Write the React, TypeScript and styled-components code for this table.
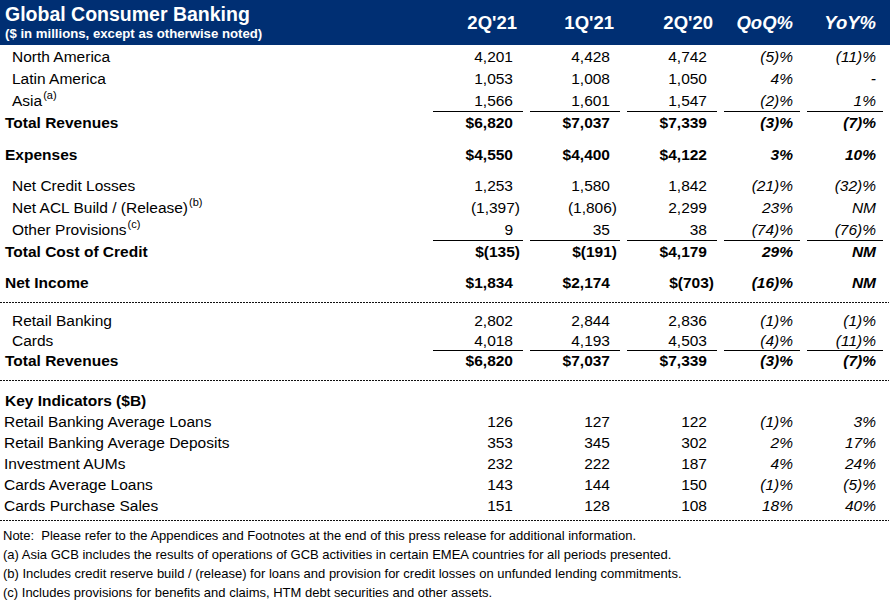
import React from "react";
import styled, { createGlobalStyle } from "styled-components";

const GlobalStyle = createGlobalStyle`
  body {
    margin: 0;
    background: #fff;
    color: #000;
    font-family: "Liberation Sans", Arial, sans-serif;
  }
`;

const Sheet = styled.div`
  width: 890px;
  display: flex;
  flex-direction: column;
`;

const Grid = styled.div<{ $h: number; $mt?: number }>`
  display: grid;
  grid-template-columns: 426px repeat(3, 90px) repeat(2, 76px);
  column-gap: 7px;
  height: ${(p) => p.$h}px;
  margin-top: ${(p) => p.$mt ?? 0}px;
`;

const HeaderBar = styled(Grid)`
  background: #002f73;
  color: #fff;
`;

const TitleBlock = styled.div`
  display: flex;
  flex-direction: column;
  padding: 3px 0 0 5px;
  font-weight: bold;
`;

const Title = styled.div`
  font-size: 19.5px;
  line-height: 22px;
`;

const Subtitle = styled.div`
  font-size: 13.2px;
  line-height: 18px;
`;

const HeadLabel = styled.div<{ $italic?: boolean; $pr: number }>`
  display: flex;
  align-items: center;
  justify-content: flex-end;
  padding-right: ${(p) => p.$pr}px;
  font-size: 18.5px;
  font-weight: bold;
  font-style: ${(p) => (p.$italic ? "italic" : "normal")};
`;

const Label = styled.div<{ $indent: number; $bold?: boolean }>`
  display: flex;
  align-items: center;
  padding-left: ${(p) => p.$indent}px;
  font-size: 15.5px;
  font-weight: ${(p) => (p.$bold ? "bold" : "normal")};
  white-space: nowrap;
`;

const Sup = styled.span`
  font-size: 11px;
  line-height: 1;
  position: relative;
  top: -6px;
  margin-left: 1px;
`;

const Value = styled.div<{ $bold?: boolean; $italic?: boolean; $pr: number; $underline?: boolean }>`
  display: flex;
  align-items: center;
  justify-content: flex-end;
  padding-right: ${(p) => p.$pr}px;
  font-size: 15.5px;
  font-weight: ${(p) => (p.$bold ? "bold" : "normal")};
  font-style: ${(p) => (p.$italic ? "italic" : "normal")};
  border-bottom: ${(p) => (p.$underline ? "1px solid #000" : "none")};
  white-space: nowrap;
`;

const Pad = styled.span`
  display: inline-block;
  width: 7px;
`;

const Dashed = styled.div<{ $mt: number }>`
  width: 889px;
  height: 1px;
  margin-top: ${(p) => p.$mt}px;
  background-image: repeating-linear-gradient(to right, #111 0 2px, transparent 2px 3px);
`;

const Notes = styled.div`
  margin-top: 5px;
  display: flex;
  flex-direction: column;
`;

const Note = styled.div`
  padding-left: 3px;
  font-size: 13px;
  line-height: 19px;
  white-space: pre;
`;

type Kind = "item" | "total" | "indicator" | "heading";

interface IRow {
  label: string;
  sup?: string;
  values: string[];
  kind: Kind;
  h: number;
  mt?: number;
  underline?: boolean;
}

const amountPad = [3, 3, 3];
const pctPad = [7, 7];

const Row = ({ row }: { row: IRow }) => {
  const bold = row.kind === "total";
  const indent = row.kind === "item" ? 12 : row.kind === "indicator" ? 4 : 5;
  return (
    <Grid $h={row.h} $mt={row.mt}>
      <Label $indent={indent} $bold={bold || row.kind === "heading"}>
        {row.label}
        {row.sup && <Sup>({row.sup})</Sup>}
      </Label>
      {row.values.map((v, i) =>
        i < 3 ? (
          <Value key={i} $bold={bold} $pr={amountPad[i]} $underline={row.underline}>
            {v}
            {v && !v.endsWith(")") && <Pad />}
          </Value>
        ) : (
          <Value key={i} $bold={bold} $italic $pr={pctPad[i - 3]} $underline={row.underline}>
            {v}
          </Value>
        )
      )}
    </Grid>
  );
};

const top: IRow[] = [
  { label: "North America", values: ["4,201", "4,428", "4,742", "(5)%", "(11)%"], kind: "item", h: 22, mt: 1 },
  { label: "Latin America", values: ["1,053", "1,008", "1,050", "4%", "-"], kind: "item", h: 22 },
  { label: "Asia", sup: "a", values: ["1,566", "1,601", "1,547", "(2)%", "1%"], kind: "item", h: 22, underline: true },
  { label: "Total Revenues", values: ["$6,820", "$7,037", "$7,339", "(3)%", "(7)%"], kind: "total", h: 22 },
  { label: "Expenses", values: ["$4,550", "$4,400", "$4,122", "3%", "10%"], kind: "total", h: 22, mt: 10 },
  { label: "Net Credit Losses", values: ["1,253", "1,580", "1,842", "(21)%", "(32)%"], kind: "item", h: 22, mt: 9 },
  { label: "Net ACL Build / (Release)", sup: "b", values: ["(1,397)", "(1,806)", "2,299", "23%", "NM"], kind: "item", h: 22 },
  { label: "Other Provisions", sup: "c", values: ["9", "35", "38", "(74)%", "(76)%"], kind: "item", h: 22, underline: true },
  { label: "Total Cost of Credit", values: ["$(135)", "$(191)", "$4,179", "29%", "NM"], kind: "total", h: 22 },
  { label: "Net Income", values: ["$1,834", "$2,174", "$(703)", "(16)%", "NM"], kind: "total", h: 22, mt: 9 },
];

const business: IRow[] = [
  { label: "Retail Banking", values: ["2,802", "2,844", "2,836", "(1)%", "(1)%"], kind: "item", h: 20, mt: 8 },
  { label: "Cards", values: ["4,018", "4,193", "4,503", "(4)%", "(11)%"], kind: "item", h: 20, underline: true },
  { label: "Total Revenues", values: ["$6,820", "$7,037", "$7,339", "(3)%", "(7)%"], kind: "total", h: 20 },
];

const indicators: IRow[] = [
  { label: "Key Indicators ($B)", values: [], kind: "heading", h: 20, mt: 10 },
  { label: "Retail Banking Average Loans", values: ["126", "127", "122", "(1)%", "3%"], kind: "indicator", h: 21 },
  { label: "Retail Banking Average Deposits", values: ["353", "345", "302", "2%", "17%"], kind: "indicator", h: 21 },
  { label: "Investment AUMs", values: ["232", "222", "187", "4%", "24%"], kind: "indicator", h: 21 },
  { label: "Cards Average Loans", values: ["143", "144", "150", "(1)%", "(5)%"], kind: "indicator", h: 21 },
  { label: "Cards Purchase Sales", values: ["151", "128", "108", "18%", "40%"], kind: "indicator", h: 21 },
];

const notes = [
  "Note:  Please refer to the Appendices and Footnotes at the end of this press release for additional information.",
  "(a) Asia GCB includes the results of operations of GCB activities in certain EMEA countries for all periods presented.",
  "(b) Includes credit reserve build / (release) for loans and provision for credit losses on unfunded lending commitments.",
  "(c) Includes provisions for benefits and claims, HTM debt securities and other assets.",
];

const App = () => {
  return (
    <>
      <GlobalStyle />
      <Sheet>
        <HeaderBar $h={45}>
          <TitleBlock>
            <Title>Global Consumer Banking</Title>
            <Subtitle>($ in millions, except as otherwise noted)</Subtitle>
          </TitleBlock>
          <HeadLabel $pr={6}>2Q'21</HeadLabel>
          <HeadLabel $pr={6}>1Q'21</HeadLabel>
          <HeadLabel $pr={4}>2Q'20</HeadLabel>
          <HeadLabel $pr={7} $italic>QoQ%</HeadLabel>
          <HeadLabel $pr={7} $italic>YoY%</HeadLabel>
        </HeaderBar>
        {top.map((r, i) => <Row key={"t" + i} row={r} />)}
        <Dashed $mt={8} />
        {business.map((r, i) => <Row key={"b" + i} row={r} />)}
        <Dashed $mt={9} />
        {indicators.map((r, i) => <Row key={"k" + i} row={r} />)}
        <Dashed $mt={4} />
        <Notes>
          {notes.map((n, i) => <Note key={i}>{n}</Note>)}
        </Notes>
      </Sheet>
    </>
  );
};

export default App;
